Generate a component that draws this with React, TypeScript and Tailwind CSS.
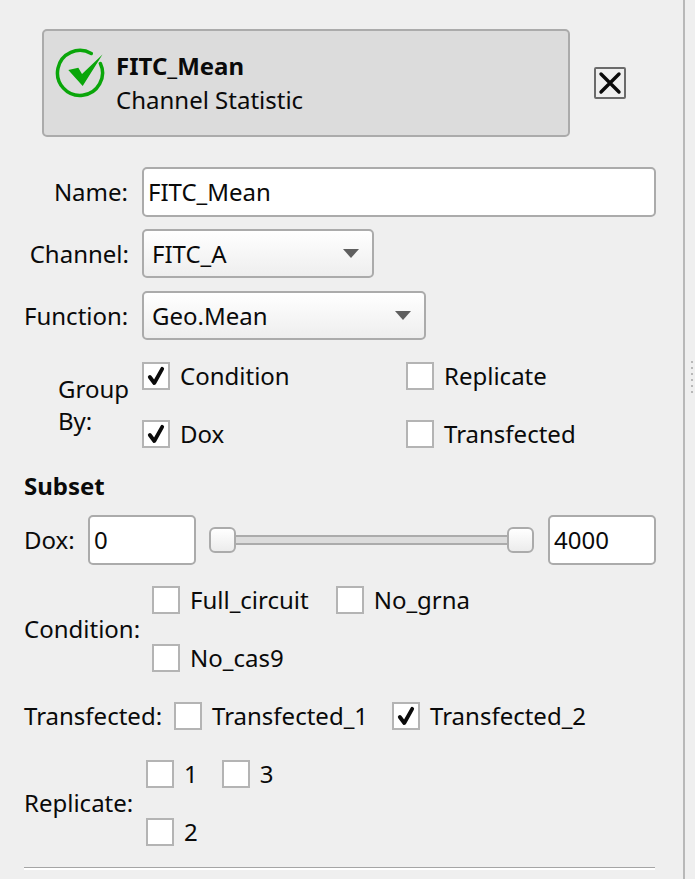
import React from 'react';

const Check = ({ label, checked = false, gap = 'gap-[10px]' }: { label: string; checked?: boolean; gap?: string }) => (
  <div className={`flex h-7 items-center ${gap}`}>
    <div className="flex h-7 w-7 shrink-0 items-center justify-center border-2 border-[#b4b4b4] bg-white">
      {checked && (
        <svg width="20" height="20" viewBox="0 0 20 20" fill="none">
          <path d="M3.8 11 L8.3 17 L16.2 2.8" stroke="#0a0a0a" strokeWidth="3.8" strokeLinecap="round" strokeLinejoin="round" />
        </svg>
      )}
    </div>
    <span className="whitespace-nowrap">{label}</span>
  </div>
);

const Combo = ({ value, width }: { value: string; width: string }) => (
  <div className={`flex h-[49px] ${width} items-center justify-between rounded-[5px] border-2 border-[#ababab] bg-gradient-to-b from-white to-[#eeeeee] pl-[8px] pr-[13px]`}>
    <span>{value}</span>
    <svg width="16" height="9" viewBox="0 0 16 9">
      <path d="M0 0 H16 L8 9 Z" fill="#5f5f5f" />
    </svg>
  </div>
);

const TextBox = ({ value, width }: { value: string; width: string }) => (
  <div className={`flex h-[50px] ${width} shrink-0 items-center rounded-[5px] border-2 border-[#ababab] bg-white pl-[4px]`}>
    {value}
  </div>
);

const Thumb = () => (
  <div className="h-[26px] w-[27px] shrink-0 rounded-[6px] border-2 border-[#ababab] bg-gradient-to-b from-white to-[#ececec]" />
);

export default function App() {
  return (
    <div
      className="flex h-[879px] w-[695px] overflow-hidden bg-[#efefef] text-[24px] leading-none text-[#0a0a0a]"
      style={{ fontFamily: '"Noto Sans", sans-serif' }}
    >
      <div className="w-[685px] shrink-0 border-r-2 border-[#b8b8b8] pl-6 pr-[24px]">
        {/* workflow item header */}
        <div className="mt-[29px] flex items-center">
          <div className="ml-[18px] flex h-[108px] w-[528px] items-start rounded-[5px] border-2 border-[#ababab] bg-[#dcdcdc] pl-[11px] pt-[17px]">
            <svg width="50" height="50" viewBox="0 0 50 50" fill="none" className="shrink-0">
              <path d="M36.25 5.5 A22.5 22.5 0 1 0 45.4 15.5" stroke="#0aa60a" strokeWidth="3.5" strokeLinecap="round" />
              <path d="M13.3 22 L23.3 19.7 L27 26 L47.5 6.5 L27.7 38 Z" fill="#0aa60a" />
            </svg>
            <div className="ml-[11px] flex flex-col">
              <span className="mt-[6px] h-[33px] font-bold">FITC_Mean</span>
              <span className="mt-[1px]">Channel Statistic</span>
            </div>
          </div>
          <div className="ml-6 flex h-8 w-8 items-center justify-center rounded-[2px] border-2 border-[#6b6b6b]">
            <svg width="24" height="24" viewBox="0 0 24 24" fill="none">
              <path d="M3 3 L21 21 M21 3 L3 21" stroke="#0a0a0a" strokeWidth="3.4" strokeLinecap="round" />
            </svg>
          </div>
        </div>

        {/* name / channel / function */}
        <div className="mt-[30px] flex items-center">
          <span className="w-[105px] pr-px text-right">Name:</span>
          <div className="ml-[13px]">
            <TextBox value="FITC_Mean" width="w-[514px]" />
          </div>
        </div>
        <div className="mt-[12px] flex items-center">
          <span className="w-[105px] text-right">Channel:</span>
          <div className="ml-[13px]">
            <Combo value="FITC_A" width="w-[232px]" />
          </div>
        </div>
        <div className="mt-[13px] flex items-center">
          <span className="w-[105px] pr-px text-right">Function:</span>
          <div className="ml-[13px]">
            <Combo value="Geo.Mean" width="w-[284px]" />
          </div>
        </div>

        {/* group by */}
        <div className="mt-[22px] flex items-center">
          <span className="w-[105px] pl-[34px] leading-[32px]">Group By:</span>
          <div className="ml-[13px] grid grid-cols-[264px_1fr] gap-y-[30px]">
            <Check label="Condition" checked />
            <Check label="Replicate" />
            <Check label="Dox" checked />
            <Check label="Transfected" />
          </div>
        </div>

        <div className="mt-[27px] font-bold leading-[22px]">Subset</div>

        {/* dox range */}
        <div className="mt-[18px] flex items-center">
          <span className="w-[64px]">Dox:</span>
          <TextBox value="0" width="w-[108px]" />
          <div className="ml-[13px] flex w-[325px] items-center">
            <Thumb />
            <div className="h-[10px] flex-1 border-y-2 border-[#ababab] bg-[#dcdcdc]" />
            <Thumb />
          </div>
          <div className="ml-[14px]">
            <TextBox value="4000" width="w-[108px]" />
          </div>
        </div>

        {/* condition */}
        <div className="mt-[21px] flex items-center">
          <span className="w-[128px]">Condition:</span>
          <div className="flex flex-col gap-[30px]">
            <div className="flex gap-[27px]">
              <Check label="Full_circuit" />
              <Check label="No_grna" />
            </div>
            <Check label="No_cas9" />
          </div>
        </div>

        {/* transfected */}
        <div className="mt-[30px] flex items-center">
          <span className="w-[150px]">Transfected:</span>
          <div className="flex gap-[24px]">
            <Check label="Transfected_1" />
            <Check label="Transfected_2" checked />
          </div>
        </div>

        {/* replicate */}
        <div className="mt-[30px] flex items-center">
          <span className="w-[122px]">Replicate:</span>
          <div className="flex flex-col gap-[30px]">
            <div className="flex gap-[24px]">
              <Check label="1" />
              <Check label="3" />
            </div>
            <Check label="2" />
          </div>
        </div>

        <div className="mt-[21px] h-[3px] w-[631px] border-t-[1px] border-[#a5a5a5] bg-white" />
      </div>

      {/* splitter handle */}
      <div className="ml-[6px] flex flex-col gap-1 pt-[361px]">
        {[0, 1, 2, 3, 4, 5].map((i) => (
          <div key={i} className="h-[2px] w-[2px] bg-[#b8b8b8]" />
        ))}
      </div>
    </div>
  );
}
